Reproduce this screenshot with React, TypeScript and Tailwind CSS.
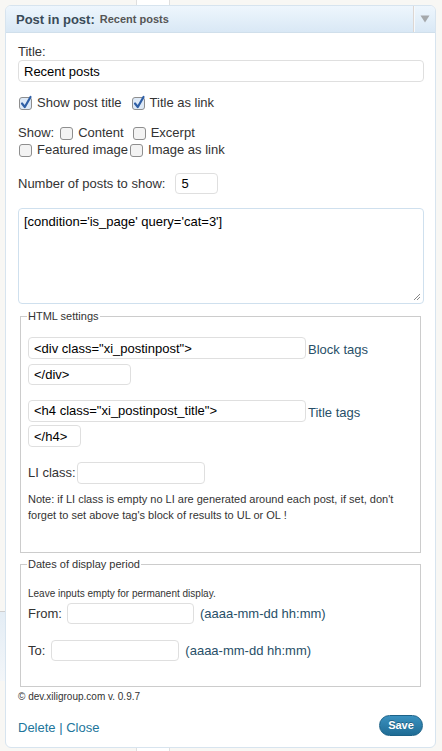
import React from 'react'

function CheckBox({ checked }: { checked?: boolean }) {
  return (
    <svg width="14" height="14" viewBox="0 0 14 14" className="shrink-0 overflow-visible">
      <rect
        x="0.5"
        y="1.5"
        width="12"
        height="12"
        rx="2.5"
        fill={checked ? '#dde9f7' : '#f3f3f3'}
        stroke="#8e8e8e"
      />
      {checked && (
        <path
          d="M3 7.5 L5.8 11 L11.5 1"
          stroke="#2f5fa6"
          strokeWidth="2.2"
          strokeLinecap="round"
          strokeLinejoin="round"
          fill="none"
        />
      )}
    </svg>
  )
}

function Field({ value = '', className = '' }: { value?: string; className?: string }) {
  return (
    <input
      readOnly
      value={value}
      className={`shrink-0 rounded-[4px] border border-[#dfdfdf] bg-white px-[5px] text-[13px] text-black outline-none ${className}`}
    />
  )
}

export default function App() {
  return (
    <div className="relative min-h-[751px] w-[442px] overflow-hidden bg-[#f8f7f4] pt-[5px] font-['Liberation_Sans',Arial,sans-serif] text-[#333]">
      {/* page content behind the widget */}
      <div className="absolute left-[136px] top-0 h-[751px] w-[34px] border-x border-[#dfdfdf] bg-white" />
      <div className="absolute left-0 top-[611px] h-[70px] w-[10px] border-t border-[#cfcfcf] bg-gradient-to-b from-[#e4edf5] to-[#f3f6f9]" />

      <div className="relative ml-[5px] w-[431px] overflow-hidden rounded-[6px] border border-[#d7e4ef] bg-white">
        {/* header */}
        <div className="flex h-[27px] items-stretch border-b border-[#d0dfeb] bg-gradient-to-b from-[#eef6fd] to-[#d9e8f5]">
          <div className="flex flex-1 items-center pl-[10px] pt-px">
            <span className="text-[13px] font-bold text-[#3a4b58]">Post in post:</span>
            <span className="ml-[5px] text-[11px] font-bold text-[#555]">Recent posts</span>
          </div>
          <div className="flex w-[22px] items-center justify-center border-l border-[#ddd6d2] shadow-[inset_1px_0_0_#f5f9fc]">
            <svg width="10" height="8" viewBox="0 0 10 8">
              <path d="M0.5 0.5 H9.5 L5 7.5 Z" fill="#a5a8ab" />
            </svg>
          </div>
        </div>

        {/* body */}
        <div className="pl-[12px] pr-[11px] pb-[11px] pt-[11px] text-[13px]">
          <div className="leading-[16px]">Title:</div>
          <Field value="Recent posts" className="h-[22px] w-full" />

          <div className="mt-[13px] flex h-[16px] items-center leading-[16px]">
            <span className="ml-px"><CheckBox checked /></span>
            <span className="ml-[4px]">Show post title</span>
            <span className="ml-[10px]"><CheckBox checked /></span>
            <span className="ml-[4px]">Title as link</span>
          </div>

          <div className="mt-[13px] flex h-[17px] items-center leading-[17px]">
            <span>Show:</span>
            <span className="ml-[6px]"><CheckBox /></span>
            <span className="ml-[4px]">Content</span>
            <span className="ml-[9px]"><CheckBox /></span>
            <span className="ml-[4px]">Excerpt</span>
          </div>
          <div className="flex h-[17px] items-center leading-[17px]">
            <span className="ml-px"><CheckBox /></span>
            <span className="ml-[4px]">Featured image</span>
            <span className="ml-[2px]"><CheckBox /></span>
            <span className="ml-[4px]">Image as link</span>
          </div>

          <div className="mt-[15px] flex items-center">
            <span>Number of posts to show:</span>
            <Field value="5" className="ml-[10px] h-[21px] w-[43px]" />
          </div>

          <div className="relative mt-[14px] h-[96px] w-full rounded-[4px] border border-[#cfe0ee] bg-white px-[5px] py-[5px] text-[13px] leading-[16px] text-black">
            [condition='is_page' query='cat=3']
            <svg width="8" height="8" viewBox="0 0 8 8" className="absolute bottom-[2px] right-[2px]">
              <path d="M7 1 L1 7 M7 4 L4 7" stroke="#888" strokeWidth="1" />
            </svg>
          </div>

          {/* HTML settings */}
          <fieldset className="ml-[2px] mr-[3px] mt-[5px] border border-[#ccc] pb-[29px] pl-[7px]">
            <legend className="-ml-px px-px text-[11px] leading-[14px]">HTML settings</legend>
            <div className="mt-[14px] flex items-center">
              <Field value={'<div class="xi_postinpost">'} className="h-[22px] w-[278px]" />
              <span className="ml-[2px] pt-[3px] text-[#284f68]">Block tags</span>
            </div>
            <Field value="</div>" className="mt-[4px] block h-[21px] w-[103px]" />
            <div className="mt-[15px] flex items-center">
              <Field value={'<h4 class="xi_postinpost_title">'} className="h-[22px] w-[278px]" />
              <span className="ml-[2px] pt-[3px] text-[#284f68]">Title tags</span>
            </div>
            <Field value="</h4>" className="mt-[3px] block h-[22px] w-[53px]" />
            <div className="mt-[15px] flex items-center">
              <span>LI class:</span>
              <Field className="ml-[1px] h-[22px] w-[128px]" />
            </div>
            <p className="mt-[7px] whitespace-nowrap text-[11px] leading-[16px]">
              Note: if LI class is empty no LI are generated around each post, if set, don't
              <br />
              forget to set above tag's block of results to UL or OL !
            </p>
          </fieldset>

          {/* Dates */}
          <fieldset className="ml-[2px] mr-[3px] mt-[4px] border border-[#ccc] pb-[25px] pl-[7px]">
            <legend className="-ml-px px-px text-[11px] leading-[14px]">Dates of display period</legend>
            <p className="mt-[16px] text-[10px] leading-[13px]">Leave inputs empty for permanent display.</p>
            <div className="mt-[3px] flex items-center">
              <span>From:</span>
              <Field className="ml-[5px] h-[21px] w-[127px]" />
              <span className="ml-[6px] text-[#284f68]">(aaaa-mm-dd hh:mm)</span>
            </div>
            <div className="mt-[16px] flex items-center">
              <span>To:</span>
              <Field className="ml-[6px] h-[21px] w-[128px]" />
              <span className="ml-[6px] text-[#284f68]">(aaaa-mm-dd hh:mm)</span>
            </div>
          </fieldset>

          <p className="mt-[3px] text-[10px] leading-[13px]">© dev.xiligroup.com v. 0.9.7</p>

          <div className="mt-[12px] flex items-start justify-between">
            <div className="mt-[5px] leading-[16px] text-[#21759b]">
              <span>Delete</span> | <span>Close</span>
            </div>
            <button className="mr-px h-[21px] w-[44px] rounded-full border border-[#1c6288] bg-gradient-to-b from-[#3a91bf] to-[#1f6c95] text-[11px] font-bold leading-[19px] text-white [text-shadow:0_-1px_0_rgba(0,0,0,0.3)]">
              Save
            </button>
          </div>
        </div>
      </div>
    </div>
  )
}
